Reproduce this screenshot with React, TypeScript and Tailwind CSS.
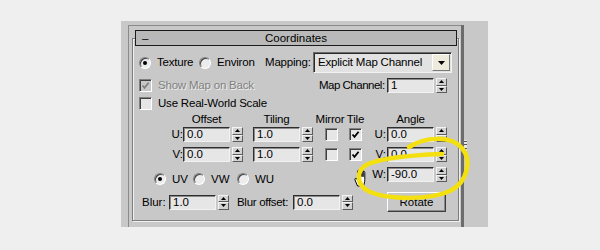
import React from "react";

function Spinner() {
  return (
    <div className="flex h-[15px] w-[11px] flex-col">
      <div className="flex flex-1 items-center justify-center border border-t-[#f4f4f4] border-l-[#f4f4f4] border-r-[#5c5c5c] border-b-[#5c5c5c] bg-[#d2d2d2]">
        <svg width="5" height="3" viewBox="0 0 5 3">
          <path d="M2.5 0 L5 3 L0 3 Z" fill="#000" />
        </svg>
      </div>
      <div className="flex flex-1 items-center justify-center border border-t-[#f4f4f4] border-l-[#f4f4f4] border-r-[#5c5c5c] border-b-[#5c5c5c] bg-[#d2d2d2]">
        <svg width="5" height="3" viewBox="0 0 5 3">
          <path d="M0 0 L5 0 L2.5 3 Z" fill="#000" />
        </svg>
      </div>
    </div>
  );
}

function SpinField({ value }: { value: string }) {
  return (
    <div className="flex items-center gap-[2px]">
      <div className="h-[15px] w-[47px] border-t border-l border-b border-r border-t-[#2e2e2e] border-l-[#2e2e2e] border-b-[#f2f2f2] border-r-[#f2f2f2] bg-[#e6e6e6] pl-[3px] text-[11.5px] leading-[13px] shadow-[inset_1px_1px_0_#8a8a8a]">
        {value}
      </div>
      <Spinner />
    </div>
  );
}

function Radio({ on }: { on?: boolean }) {
  return (
    <div className="flex h-[12px] w-[12px] shrink-0 items-center justify-center rounded-full border border-t-[#808080] border-l-[#808080] border-b-[#ffffff] border-r-[#ffffff] bg-[#ececec] shadow-[inset_1px_1px_0_#404040]">
      {on && <div className="h-[4px] w-[4px] rounded-full bg-black" />}
    </div>
  );
}

function Check({ on, disabled }: { on?: boolean; disabled?: boolean }) {
  return (
    <div
      className={
        disabled
          ? "flex h-[13px] w-[13px] shrink-0 items-center justify-center border border-t-[#808080] border-l-[#808080] border-b-[#ffffff] border-r-[#ffffff] bg-[#c8c8c8] shadow-[inset_1px_1px_0_#404040]"
          : "flex h-[13px] w-[13px] shrink-0 items-center justify-center border border-t-[#808080] border-l-[#808080] border-b-[#ffffff] border-r-[#ffffff] bg-[#e6e6e6] shadow-[inset_1px_1px_0_#404040]"
      }
    >
      {on && (
        <svg width="9" height="9" viewBox="0 0 9 9">
          <path
            d="M1.5 4.5 L3.5 6.8 L7.6 1.8"
            fill="none"
            stroke={disabled ? "#808080" : "#000"}
            strokeWidth="1.8"
          />
        </svg>
      )}
    </div>
  );
}

export default function App() {
  return (
    <div className="relative h-[250px] w-[600px] overflow-hidden bg-[#efefef] pl-[121px] pt-[21px] font-['Liberation_Sans',Arial,sans-serif] text-[11.5px] leading-[13px] text-black">
      {/* panel */}
      <div className="flex h-[206px] w-[367px] bg-[#c8c8c8] pl-[7px] pt-[4px]">
        {/* rollout */}
        <div className="h-full w-[333px] border-l border-t border-[#8a8a8a] pl-[3px] pr-[2px] pt-[12px]">
          <div className="w-[327px] border border-[#7c7c7c] pb-[8px] shadow-[inset_1px_1px_0_#f0f0f0,1px_1px_0_#f0f0f0]">
            {/* header */}
            <div className="-mt-[9px] ml-[2px] grid h-[16px] w-[322px] grid-cols-[20px_1fr_20px] items-center border border-[#1c1c1c] bg-[#b9b9b9]">
              <span className="pl-[6px]">–</span>
              <span className="text-center">Coordinates</span>
              <span />
            </div>

            {/* texture / environ / mapping */}
            <div className="mt-[6px] flex h-[21px] items-center whitespace-nowrap">
              <div className="ml-[6px]">
                <Radio on />
              </div>
              <span className="ml-[6px] w-[42px] tracking-[-0.2px]">Texture</span>
              <Radio />
              <span className="ml-[6px] w-[42px] tracking-[-0.2px]">Environ</span>
              <span className="ml-[6px] w-[48px] tracking-[-0.2px]">Mapping:</span>
              <div className="flex h-[21px] w-[139px] items-center border-t border-l border-b border-r border-t-[#6a6a6a] border-l-[#6a6a6a] border-b-[#f2f2f2] border-r-[#f2f2f2] bg-[#e2e2e2] shadow-[inset_1px_1px_0_#2a2a2a]">
                <span className="flex-1 pl-[4px] text-[11.5px] tracking-[-0.2px]">Explicit Map Channel</span>
                <div className="mr-[1px] flex h-[17px] w-[18px] items-center justify-center border border-t-[#ffffff] border-l-[#ffffff] border-b-[#7a7a7a] border-r-[#7a7a7a] bg-[#eeebdc]">
                  <svg width="7" height="4" viewBox="0 0 7 4">
                    <path d="M0 0 L7 0 L3.5 4 Z" fill="#000" />
                  </svg>
                </div>
              </div>
            </div>

            {/* show map on back / map channel */}
            <div className="mt-[5px] flex h-[15px] items-center whitespace-nowrap">
              <div className="ml-[6px]">
                <Check on disabled />
              </div>
              <span className="ml-[6px] w-[161px] tracking-[-0.2px] text-[#808080] [text-shadow:1px_1px_0_#eeeeee]">
                Show Map on Back
              </span>
              <span className="w-[68px] tracking-[-0.5px]">Map Channel:</span>
              <SpinField value="1" />
            </div>

            {/* real world scale */}
            <div className="mt-[3px] flex h-[14px] items-center whitespace-nowrap">
              <div className="ml-[6px]">
                <Check />
              </div>
              <span className="ml-[6px] tracking-[-0.2px]">Use Real-World Scale</span>
            </div>

            {/* column titles */}
            <div className="mt-[3px] flex h-[13px] items-center whitespace-nowrap tracking-[-0.2px]">
              <span className="ml-[50px] w-[47px] text-center">Offset</span>
              <span className="ml-[23px] w-[47px] text-center">Tiling</span>
              <span className="ml-[15px] flex w-[30px] justify-center">Mirror</span>
              <span className="flex w-[21px] justify-center">Tile</span>
              <span className="ml-[21px] w-[47px] text-center">Angle</span>
            </div>

            {/* U row */}
            <div className="mt-[1px] flex h-[15px] items-center">
              <span className="w-[50px] text-right">U:</span>
              <SpinField value="0.0" />
              <div className="ml-[10px]">
                <SpinField value="1.0" />
              </div>
              <div className="ml-[12px]">
                <Check />
              </div>
              <div className="ml-[11px]">
                <Check on />
              </div>
              <span className="w-[25px] pr-[1px] text-right">U:</span>
              <SpinField value="0.0" />
            </div>

            {/* V row */}
            <div className="mt-[5px] flex h-[15px] items-center">
              <span className="w-[50px] text-right">V:</span>
              <SpinField value="0.0" />
              <div className="ml-[10px]">
                <SpinField value="1.0" />
              </div>
              <div className="ml-[12px]">
                <Check />
              </div>
              <div className="ml-[11px]">
                <Check on />
              </div>
              <span className="w-[25px] pr-[1px] text-right">V:</span>
              <SpinField value="0.0" />
            </div>

            {/* UV / VW / WU + W */}
            <div className="mt-[5px] flex h-[19px] items-start whitespace-nowrap">
              <div className="mt-[6px] flex h-[12px] items-center">
                <div className="ml-[21px]">
                  <Radio on />
                </div>
                <span className="ml-[6px] w-[21px]">UV</span>
                <Radio />
                <span className="ml-[6px] w-[26px]">VW</span>
                <Radio />
                <span className="ml-[6px] w-[30px]">WU</span>
              </div>
              <div className="ml-[77px] flex h-[15px] items-center">
                <span className="w-[25px] pr-[1px] text-right">W:</span>
                <SpinField value="-90.0" />
              </div>
            </div>

            {/* blur row */}
            <div className="mt-[6px] flex h-[20px] items-center whitespace-nowrap">
              <span className="ml-[9px] w-[27px]">Blur:</span>
              <SpinField value="1.0" />
              <span className="ml-[8px] w-[56px] tracking-[-0.3px]">Blur offset:</span>
              <SpinField value="0.0" />
              <button
                type="button"
                className="ml-[34px] h-[20px] w-[59px] border border-t-[#ffffff] border-l-[#ffffff] border-b-[#3c3c3c] border-r-[#3c3c3c] bg-[#c8c8c8] text-[11.5px] leading-[13px] shadow-[inset_-1px_-1px_0_#8a8a8a]"
              >
                Rotate
              </button>
            </div>
          </div>
        </div>

        {/* scroll track */}
        <div className="flex h-full w-[6px] flex-col">
          <div className="h-[115px] w-[3px] bg-[#6c6c6c]" />
          <div className="flex h-[16px] w-[6px] flex-col justify-between border-l-[3px] border-[#6c6c6c] bg-[#e8e8e8] py-[1px]">
            <div className="h-[1px] bg-[#555]" />
            <div className="h-[1px] bg-[#555]" />
            <div className="h-[1px] bg-[#555]" />
            <div className="h-[1px] bg-[#555]" />
            <div className="h-[1px] bg-[#555]" />
          </div>
          <div className="w-[3px] flex-1 bg-[#6c6c6c]" />
        </div>
      </div>

      {/* hand cursor */}
      <svg className="absolute left-[353px] top-[168px]" width="16" height="19" viewBox="0 0 16 19">
        <path
          d="M4.5 18 L2 12 C1.4 10.4 3 9.6 3.9 11 L4.6 12.2 L4.6 3.2 C4.6 1.9 6.4 1.9 6.4 3.2 L6.4 8.5 L6.4 2.1 C6.4 0.8 8.2 0.8 8.2 2.1 L8.2 8.5 L8.2 2.8 C8.2 1.5 10 1.5 10 2.8 L10 8.8 L10 4.3 C10 3 11.8 3 11.8 4.3 L11.8 11.5 C11.8 14.5 11 16 10.5 18 Z"
          fill="#fff"
          stroke="#000"
          strokeWidth="1"
        />
      </svg>

      {/* yellow annotation */}
      <svg className="pointer-events-none absolute left-0 top-0" width="600" height="250">
        <path
          d="M409 147 C425 137 450 135 462 148 C472 160 468 182 450 191 C430 200 390 200 370 192 C355 185 356 170 368 164 C385 157 415 155 442 154"
          fill="none"
          stroke="#f4e00e"
          strokeWidth="4.5"
          strokeLinecap="round"
        />
      </svg>
    </div>
  );
}
